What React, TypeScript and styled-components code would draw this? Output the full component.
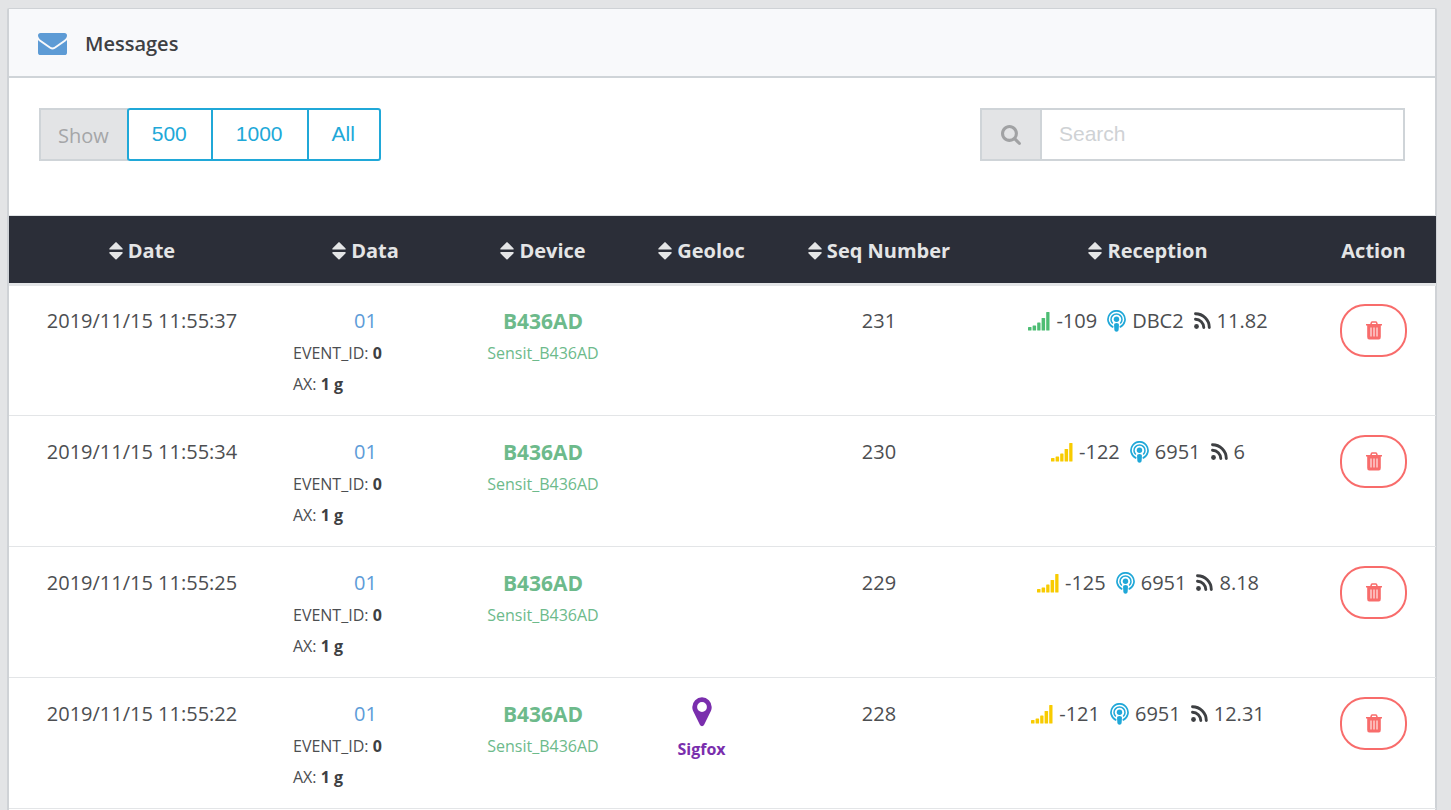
import React from "react";
import styled, { createGlobalStyle } from "styled-components";

const GlobalStyle = createGlobalStyle`
  *, *::before, *::after { box-sizing: border-box; }
  body {
    margin: 0;
    background: #e3e4e6;
    color: #3e4043;
    font-family: "Open Sans", "Noto Sans", sans-serif;
    font-size: 20px;
    line-height: 32px;
  }
`;

const Card = styled.main`
  margin: 8px 14px 0 7px;
  min-height: calc(100vh - 8px);
  background: #fff;
  border: 2px solid #cfd2d6;
  border-top-width: 1px;
  border-bottom: 0;
  border-radius: 2px 2px 0 0;
`;

const CardHeader = styled.header`
  display: flex;
  align-items: center;
  gap: 18px;
  height: 69px;
  padding: 2px 29px 0;
  background: #f8f9fb;
  border-bottom: 2px solid #cfd4d8;
`;

const Title = styled.h1`
  margin: 0;
  font-size: 20px;
  font-weight: 600;
`;

const Toolbar = styled.div`
  display: flex;
  justify-content: space-between;
  padding: 30px 30px 54px;
`;

const Group = styled.div`
  display: flex;
  height: 53px;
`;

const SearchGroup = styled.form`
  display: flex;
  width: 425px;
  height: 53px;
`;

const Addon = styled.span`
  display: flex;
  align-items: center;
  justify-content: center;
  padding: 2px 19px 0 17px;
  background: #e3e4e6;
  border: 2px solid #cfd4d8;
  border-right-width: 0;
  color: #a5a6a8;
`;

const AddonLabel = styled.label`
  display: flex;
  align-items: center;
  justify-content: center;
  flex: 0 0 60px;
  background: #e3e4e6;
  border: 2px solid #cfd4d8;
  border-right-width: 0;
  color: #a1a2a4;
`;

const SizeButton = styled.button`
  margin-left: -2px;
  padding: 0 24px 2px 23px;
  background: #fff;
  border: 2px solid #20a8d8;
  color: #20a8d8;
  font-family: "Liberation Sans", Arial, sans-serif;
  font-size: 21px;
  cursor: pointer;

  &:first-of-type { border-radius: 3px 0 0 3px; margin-left: -1px; }
  &:last-of-type { border-radius: 0 3px 3px 0; }
`;

const SearchInput = styled.input`
  flex: 1;
  min-width: 0;
  padding: 0 17px 2px;
  background: #fff;
  border: 2px solid #cfd4d8;
  border-radius: 0;
  color: #3e4043;
  font-family: "Liberation Sans", Arial, sans-serif;
  font-size: 21px;

  &::placeholder { color: #cfd2d5; opacity: 1; }
`;

const TableWrap = styled.div`
  margin-right: -1px;
  border-top: 1px solid #e1e4e6;
`;

const Table = styled.table`
  width: 100%;
  table-layout: fixed;
  border-collapse: separate;
  border-spacing: 0;
  text-align: center;
`;

const HeadCell = styled.th`
  height: 67px;
  padding: 2px 4px 0;
  background: #2b2e38;
  color: #e4e5e6;
  font-weight: 700;
  white-space: nowrap;
`;

const SortButton = styled.button`
  display: inline-flex;
  align-items: center;
  gap: 5px;
  padding: 0;
  background: none;
  border: 0;
  color: inherit;
  font: inherit;
  vertical-align: top;
  cursor: pointer;
`;

const Row = styled.tr`
  &:first-child > td {
    border-top-width: 3px;
    padding-top: 18px;
  }
  &:last-child > td { border-bottom: 1px solid #e3e5e7; }
`;

const Cell = styled.td`
  padding: 19px 18px 15px;
  border-top: 1px solid #e3e5e7;
  color: #4c4e51;
  line-height: 34px;
  vertical-align: top;
  white-space: nowrap;
`;

const DataLink = styled.a`
  display: block;
  color: #5d9cd8;
  text-decoration: none;
`;

const Fields = styled.ul`
  margin: 0;
  padding: 0;
  list-style: none;
  font-size: 16px;
  line-height: 31px;
  text-align: left;

  b { color: #3e4043; }
`;

const DeviceLink = styled.a`
  display: block;
  color: #6dba8b;
  font-size: 21px;
  font-weight: 700;
  text-decoration: none;

  small {
    display: block;
    font-size: 16px;
    font-weight: 400;
    line-height: 31px;
  }
`;

const GeoLink = styled.a`
  display: flex;
  flex-direction: column;
  align-items: center;
  gap: 7px;
  color: #7a2ead;
  font-size: 16px;
  font-weight: 700;
  line-height: 31px;
  text-decoration: none;
`;

const Reception = styled.div`
  display: flex;
  align-items: center;
  justify-content: center;
  gap: 10px;
`;

const Metric = styled.span`
  display: inline-flex;
  align-items: center;
  gap: 6px;

  svg { margin-bottom: 1px; }
`;

const DeleteButton = styled.button`
  display: inline-flex;
  align-items: center;
  justify-content: center;
  width: 67px;
  height: 53px;
  padding: 0 0 1px;
  background: #fff;
  border: 2px solid #f86c6b;
  border-radius: 25px;
  color: #f86c6b;
  vertical-align: top;
  cursor: pointer;
`;

const EnvelopeIcon = () => (
  <svg width="29" height="22" viewBox="0 0 29 22" fill="#5d9bd5" aria-hidden="true">
    <path d="M0 2.6A2.6 2.6 0 0 1 2.6 0H26.4A2.6 2.6 0 0 1 29 2.6C29 4.4 27.8 6 26.2 7.1L18 12.8C17 13.5 15.7 14.6 14.5 14.6S12 13.5 11 12.8L2.8 7.1C1.5 6.2 0 4.2 0 2.6Z" />
    <path d="M0 7.1C.5 7.6 1 8.1 1.6 8.500L9.900 14.200C11.300 15.200 12.800 16.400 14.500 16.400S17.700 15.200 19.100 14.200L27.400 8.500C28 8.100 28.500 7.600 29 7.100V19.400A2.600 2.600 0 0 1 26.400 22H2.600A2.600 2.600 0 0 1 0 19.400Z" />
  </svg>
);

const SearchIcon = () => (
  <svg width="20" height="20" viewBox="64 128 1664 1664" fill="currentColor" aria-hidden="true">
    <path d="M1216 832q0-185-131.500-316.500t-316.500-131.500-316.500 131.500-131.500 316.500 131.500 316.500 316.500 131.500 316.500-131.500 131.500-316.500zm512 832q0 52-38 90t-90 38q-54 0-90-38l-343-342q-179 124-399 124-143 0-273.500-55.500t-225-150-150-225-55.500-273.500 55.500-273.500 150-225 225-150 273.500-55.500 273.500 55.500 225 150 150 225 55.500 273.500q0 220-124 399l343 343q37 37 37 90z" />
  </svg>
);

const SortIcon = () => (
  <svg width="14" height="18" viewBox="0 0 14 18" fill="currentColor" aria-hidden="true">
    <path d="M6.400.4Q7-.2 7.600.4L13.400 6.200Q14.200 7.500 13 7.600H1Q-.2 7.500.6 6.200Z" />
    <path d="M6.400 17.200Q7 17.800 7.600 17.200L13.400 11.600Q14.200 10.200 13 10.100H1Q-.2 10.200.6 11.600Z" />
  </svg>
);

const SignalIcon = ({ color }: { color: string }) => (
  <svg width="22" height="20" viewBox="0 0 22 20" fill={color} aria-hidden="true">
    <rect x="0" y="16" width="3.500" height="3.500" rx=".6" />
    <rect x="4.600" y="14.500" width="3.500" height="5" rx=".6" />
    <rect x="9.200" y="11.500" width="3.300" height="8" rx=".6" />
    <rect x="13.600" y="7" width="3.500" height="12.500" rx=".6" />
    <rect x="18.200" y="1" width="3.300" height="18.500" rx=".6" />
  </svg>
);

const StationIcon = () => (
  <svg width="19" height="22" viewBox="0 0 19 22" fill="none" stroke="#20a8d8" aria-hidden="true">
    <path d="M6.300 17.200A8.500 8.500 0 1 1 12.700 17.200" strokeWidth="1.700" />
    <path d="M5.800 13.500A5.500 5.500 0 1 1 13.200 13.500" strokeWidth="1.500" />
    <circle cx="9.500" cy="9.300" r="2.700" fill="#20a8d8" stroke="none" />
    <path d="M7 14.500Q7 12.900 9.500 12.900T12 14.500L11.600 20Q11.400 21.700 9.500 21.700T7.400 20Z" fill="#20a8d8" stroke="none" />
  </svg>
);

const RssIcon = () => (
  <svg width="17" height="18" viewBox="0 0 17 18" fill="none" stroke="#3e4043" strokeLinecap="round" aria-hidden="true">
    <circle cx="2.500" cy="14.500" r="2.400" fill="#3e4043" stroke="none" />
    <path d="M1.500 7.200A8.500 8.500 0 0 1 9.800 15.500" strokeWidth="2.900" />
    <path d="M1.500 1.800A13.800 13.800 0 0 1 15.300 15.500" strokeWidth="2.900" />
  </svg>
);

const PinIcon = () => (
  <svg width="20" height="30" viewBox="0 0 20 30" fill="currentColor" aria-hidden="true">
    <path fillRule="evenodd" d="M10 .3A9.700 9.700 0 0 1 19.700 10C19.700 11.400 19.500 12.700 19 13.700L12 28.100A2.300 2.300 0 0 1 8 28.100L1 13.700C.5 12.700.3 11.400.3 10A9.700 9.700 0 0 1 10 .3ZM10 5.100A4.900 4.900 0 1 0 10 14.900A4.900 4.900 0 1 0 10 5.100Z" />
  </svg>
);

const TrashIcon = () => (
  <svg width="16" height="19" viewBox="0 0 16 19" aria-hidden="true">
    <path d="M4.800 3.500L5.500 1.400Q5.700 .9 6.300 .9H9.700Q10.300 .9 10.500 1.400L11.200 3.500" fill="none" stroke="currentColor" strokeWidth="1.500" />
    <path d="M0 3H16V4.600H14.800V16.100Q14.800 18.600 12.800 18.600H3.200Q1.200 18.600 1.200 16.100V4.600H0Z" fill="currentColor" />
    <path d="M5 6.500V15.500M8 6.500V15.500M11 6.500V15.500" stroke="#fff" strokeWidth="1" />
  </svg>
);

const columns = [
  { label: "Date", width: 266, sortable: true },
  { label: "Data", width: 181, sortable: true },
  { label: "Device", width: 174, sortable: true },
  { label: "Geoloc", width: 143, sortable: true },
  { label: "Seq Number", width: 212, sortable: true },
  { label: "Reception", width: 326, sortable: true },
  { label: "Action", width: 125, sortable: false },
];

const GREEN = "#4dbd74";
const YELLOW = "#f8cb00";

const messages = [
  { date: "2019/11/15 11:55:37", seq: 231, rssi: "-109", color: GREEN, station: "DBC2", snr: "11.82", geoloc: "" },
  { date: "2019/11/15 11:55:34", seq: 230, rssi: "-122", color: YELLOW, station: "6951", snr: "6", geoloc: "" },
  { date: "2019/11/15 11:55:25", seq: 229, rssi: "-125", color: YELLOW, station: "6951", snr: "8.18", geoloc: "" },
  { date: "2019/11/15 11:55:22", seq: 228, rssi: "-121", color: YELLOW, station: "6951", snr: "12.31", geoloc: "Sigfox" },
];

export default function App() {
  return (
    <>
      <GlobalStyle />
      <Card>
        <CardHeader>
          <EnvelopeIcon />
          <Title>Messages</Title>
        </CardHeader>
        <Toolbar>
          <Group>
            <Addon>Show</Addon>
            <SizeButton type="button">500</SizeButton>
            <SizeButton type="button">1000</SizeButton>
            <SizeButton type="button">All</SizeButton>
          </Group>
          <SearchGroup onSubmit={(e) => e.preventDefault()}>
            <AddonLabel htmlFor="search" aria-label="Search">
              <SearchIcon />
            </AddonLabel>
            <SearchInput id="search" type="text" placeholder="Search" />
          </SearchGroup>
        </Toolbar>
        <TableWrap>
          <Table>
            <colgroup>
              {columns.map((c) => (
                <col key={c.label} width={c.width} />
              ))}
            </colgroup>
            <thead>
              <tr>
                {columns.map((c) => (
                  <HeadCell key={c.label} scope="col">
                    {c.sortable ? (
                      <SortButton type="button">
                        <SortIcon />
                        {c.label}
                      </SortButton>
                    ) : (
                      c.label
                    )}
                  </HeadCell>
                ))}
              </tr>
            </thead>
            <tbody>
              {messages.map((m) => (
                <Row key={m.seq}>
                  <Cell>{m.date}</Cell>
                  <Cell>
                    <DataLink href="#data">01</DataLink>
                    <Fields>
                      <li>EVENT_ID: <b>0</b></li>
                      <li>AX: <b>1 g</b></li>
                    </Fields>
                  </Cell>
                  <Cell>
                    <DeviceLink href="#device">
                      B436AD
                      <small>Sensit_B436AD</small>
                    </DeviceLink>
                  </Cell>
                  <Cell>
                    {m.geoloc && (
                      <GeoLink href="#geoloc">
                        <PinIcon />
                        {m.geoloc}
                      </GeoLink>
                    )}
                  </Cell>
                  <Cell>{m.seq}</Cell>
                  <Cell>
                    <Reception>
                      <Metric><SignalIcon color={m.color} />{m.rssi}</Metric>
                      <Metric><StationIcon />{m.station}</Metric>
                      <Metric><RssIcon />{m.snr}</Metric>
                    </Reception>
                  </Cell>
                  <Cell>
                    <DeleteButton type="button" aria-label={`Delete message ${m.seq}`}>
                      <TrashIcon />
                    </DeleteButton>
                  </Cell>
                </Row>
              ))}
            </tbody>
          </Table>
        </TableWrap>
      </Card>
    </>
  );
}
